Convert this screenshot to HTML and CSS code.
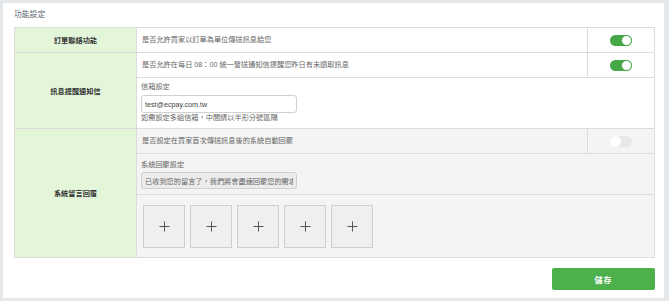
FILE: index.html
```html
<!DOCTYPE html>
<html lang="zh-Hant">
<head>
<meta charset="utf-8">
<link rel="stylesheet" href="styles.css">
</head>
<body>
<div class="panel">
  <div class="title">功能設定</div>
  <table class="settings">
    <colgroup>
      <col class="c-label"><col class="c-main"><col class="c-switch">
    </colgroup>
    <tr>
      <th class="label">訂單聯絡功能</th>
      <td class="text">是否允許買家以訂單為單位傳送訊息給您</td>
      <td class="sw"><span class="switch on"></span></td>
    </tr>
    <tr>
      <th class="label" rowspan="2">訊息提醒通知信</th>
      <td class="text">是否允許在每日 08：00 統一發送通知信提醒您昨日有未讀取訊息</td>
      <td class="sw"><span class="switch on"></span></td>
    </tr>
    <tr>
      <td class="form email" colspan="2">
        <div class="flabel">信箱設定</div>
        <input class="field" type="text" value="test@ecpay.com.tw">
        <div class="help">如需設定多組信箱，中間請以半形分號區隔</div>
      </td>
    </tr>
    <tr class="grey">
      <th class="label" rowspan="3">系統留言回覆</th>
      <td class="text">是否設定在買家首次傳送訊息後的系統自動回覆</td>
      <td class="sw"><span class="switch"></span></td>
    </tr>
    <tr class="grey">
      <td class="form reply" colspan="2">
        <div class="flabel">系統回覆設定</div>
        <input class="field ro" type="text" readonly value="已收到您的留言了，我們將會盡速回覆您的需求，謝謝！">
      </td>
    </tr>
    <tr class="grey">
      <td class="uploads" colspan="2">
        <div class="boxes">
          <span class="box"><svg width="11" height="11" viewBox="0 0 11 11"><path d="M5.5 0.5V10.5M0.5 5.5H10.5" stroke="#555" stroke-width="1" fill="none"/></svg></span>
          <span class="box"><svg width="11" height="11" viewBox="0 0 11 11"><path d="M5.5 0.5V10.5M0.5 5.5H10.5" stroke="#555" stroke-width="1" fill="none"/></svg></span>
          <span class="box"><svg width="11" height="11" viewBox="0 0 11 11"><path d="M5.5 0.5V10.5M0.5 5.5H10.5" stroke="#555" stroke-width="1" fill="none"/></svg></span>
          <span class="box"><svg width="11" height="11" viewBox="0 0 11 11"><path d="M5.5 0.5V10.5M0.5 5.5H10.5" stroke="#555" stroke-width="1" fill="none"/></svg></span>
          <span class="box"><svg width="11" height="11" viewBox="0 0 11 11"><path d="M5.5 0.5V10.5M0.5 5.5H10.5" stroke="#555" stroke-width="1" fill="none"/></svg></span>
        </div>
      </td>
    </tr>
  </table>
  <div class="actions">
    <button class="save" type="button">儲存</button>
  </div>
</div>
</body>
</html>
```
FILE: styles.css
```css
html, body {
  margin: 0;
  padding: 0;
}
body {
  background: #e5e8eb;
  font-family: "Liberation Sans", "Noto Sans CJK TC", sans-serif;
  font-size: 7.2px;
  color: #666;
  padding: 3px 5px 3px 3px;
  height: 301px;
  box-sizing: border-box;
}
.panel {
  background: #fff;
  width: 661px;
  height: 295px;
  box-sizing: border-box;
  padding: 7px 9px 8px 11px;
  display: flex;
  flex-direction: column;
}
.title {
  font-size: 7.8px;
  line-height: 10px;
  color: #56666f;
  margin-bottom: 7px;
}
.settings {
  width: 641px;
  border-collapse: collapse;
  table-layout: fixed;
}
.c-label { width: 122px; }
.c-switch { width: 67px; }
.settings th, .settings td {
  border: 1px solid #dcdcdc;
  padding: 0;
}
.label {
  background: #e3f6d9;
  color: #333;
  font-weight: bold;
  text-align: center;
  vertical-align: middle;
}
.text {
  padding: 7px 5px 7px 5px !important;
  line-height: 10px;
  vertical-align: middle;
}
.sw {
  text-align: center;
  vertical-align: middle;
  line-height: 0;
}
.grey td { background: #f4f4f4; }
.switch {
  display: inline-block;
  position: relative;
  width: 22px;
  height: 11px;
  border-radius: 6px;
  background: #e8e8e8;
  box-sizing: border-box;
}
.switch::after {
  content: "";
  position: absolute;
  left: 0;
  top: 0;
  width: 11px;
  height: 11px;
  border-radius: 50%;
  background: #fff;
  box-sizing: border-box;
}
.switch.on { background: #46a846; }
.switch.on::after {
  left: 11px;
  border: 1px solid #46a846;
}
.form {
  padding: 4px 5px 5px 4px !important;
  vertical-align: top;
}
.reply { padding-top: 6px !important; }
.flabel {
  line-height: 10px;
  margin-bottom: 3px;
}
.reply .flabel { margin-bottom: 2px; }
.field {
  display: block;
  width: 156px;
  height: 18px;
  box-sizing: border-box;
  border: 1px solid #d0d0d0;
  border-radius: 3px;
  padding: 0 3px;
  margin: 0;
  font-family: "Liberation Sans", "Noto Sans CJK TC", sans-serif;
  font-size: 7.2px;
  color: #444;
  background: #fff;
  outline: none;
}
.field.ro {
  height: 17px;
  background: #ececec;
  color: #666;
}
.help {
  line-height: 10px;
}
.uploads {
  padding: 10px 6px 9px 6px !important;
}
.boxes {
  display: flex;
  gap: 5px;
}
.box {
  width: 42px;
  height: 43px;
  box-sizing: border-box;
  border: 1px solid #cfcfcf;
  background: #efefef;
  display: flex;
  align-items: center;
  justify-content: center;
}
.actions {
  display: flex;
  justify-content: flex-end;
  margin-top: 10px;
}
.save {
  width: 103px;
  height: 22px;
  border: none;
  border-radius: 2px;
  background: #4cb04c;
  color: #fff;
  font-family: "Liberation Sans", "Noto Sans CJK TC", sans-serif;
  font-size: 8px;
  font-weight: bold;
  letter-spacing: 1px;
  padding: 0;
}
```
